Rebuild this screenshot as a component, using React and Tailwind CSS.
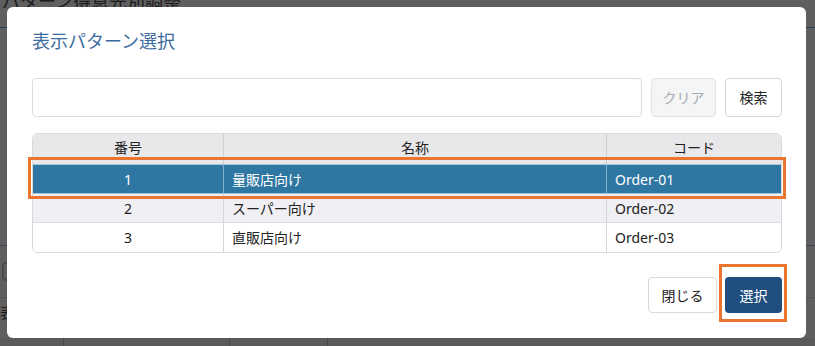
import React from "react";

const rows = [
  { no: 1, name: "量販店向け", code: "Order-01" },
  { no: 2, name: "スーパー向け", code: "Order-02" },
  { no: 3, name: "直販店向け", code: "Order-03" },
];

const font = { fontFamily: '"Noto Sans", "Noto Sans CJK JP", sans-serif' };

export default function App() {
  const selected = 1;

  return (
    <div className="relative w-[815px] h-[346px] overflow-hidden bg-[#5f5f5f]" style={font}>
      {/* page behind the overlay */}
      <div className="flex flex-col">
        <div className="h-[40px] border-b border-[#2c3e55] pl-[2px] -mt-[12px] text-[18px] leading-[26px] text-[#1c1c1c]">
          パターン得意先別調整
        </div>
        <div className="h-[218px] border-b border-[#3a4658]" />
        <div className="flex items-start pt-[16px] h-[52px] border-b border-[#545454]">
          <div className="ml-[2px] w-[20px] h-[19px] rounded border-2 border-[#4a4a4a]" />
        </div>
        <div className="h-[36px] pt-[4px] text-[14px] text-[#1c1c1c]">表</div>
      </div>
      <div className="absolute left-0 right-0 top-[338px] h-[8px] flex bg-[#5a5a5a]">
        <div className="w-[64px] border-r border-[#4a4a4a]" />
        <div className="w-[166px] border-r border-[#4a4a4a]" />
        <div className="w-[98px] border-r border-[#4a4a4a]" />
      </div>

      {/* modal */}
      <div className="absolute left-[7px] top-[7px] w-[799px] h-[331px] rounded-[6px] bg-white pl-[25px] pr-[24px] pt-[21px] pb-[25px] flex flex-col">
        <h2 className="text-[18px] leading-[26px] text-[#3b6b9f] font-normal">表示パターン選択</h2>

        <div className="mt-[24px] flex gap-[9px] h-[39px]">
          <input
            type="text"
            className="flex-1 h-full rounded-[4px] border border-[#dcdcdc] bg-white px-3 text-[14px] outline-none"
          />
          <button className="w-[65px] h-full rounded-[4px] border border-[#e2e4e8] bg-[#f4f5f7] text-[14px] text-[#a6a9ad]">
            クリア
          </button>
          <button className="w-[57px] h-full rounded-[4px] border border-[#d6d6d6] bg-white text-[14px] text-[#222]">
            検索
          </button>
        </div>

        <div className="mt-[16px] rounded-[6px] border border-[#dadada] overflow-hidden text-[14px] text-[#222]">
          <div className="grid grid-cols-[191px_383px_1fr] h-[30px] bg-[#e8e8eb] items-center">
            <div className="text-center border-r border-[#cfcfd2] h-full leading-[28px]">番号</div>
            <div className="text-center border-r border-[#cfcfd2] h-full leading-[28px]">名称</div>
            <div className="text-center h-full leading-[28px]">コード</div>
          </div>
          {rows.map((r, i) => {
            const isSel = r.no === selected;
            return (
              <div
                key={r.no}
                className={`grid grid-cols-[191px_383px_1fr] ${
                  isSel
                    ? "h-[30px] bg-[#2e77a3] text-white border-y border-[#a9c4d6]"
                    : i % 2 === 1
                    ? "h-[29px] bg-[#f0f0f4] border-b border-[#dedee2]"
                    : "h-[29px] bg-white"
                }`}
              >
                <div className={`flex items-center justify-center border-r ${isSel ? "border-[#86aec6]" : "border-[#d6d6d8]"}`}>
                  {r.no}
                </div>
                <div className={`flex items-center pl-[8px] border-r ${isSel ? "border-[#86aec6]" : "border-[#d6d6d8]"}`}>
                  {r.name}
                </div>
                <div className="flex items-center pl-[8px]">{r.code}</div>
              </div>
            );
          })}
        </div>

        <div className="mt-auto flex justify-end gap-[8px]">
          <button className="w-[69px] h-[36px] rounded-[4px] border border-[#d9d9d9] bg-white text-[14px] text-[#222]">
            閉じる
          </button>
          <button className="w-[57px] h-[36px] rounded-[4px] bg-[#1f4e7f] text-[14px] text-white">
            選択
          </button>
        </div>

        {/* highlight annotations */}
        <div className="absolute left-[21px] top-[150px] w-[758px] h-[42px] border-[3px] border-[#ec7431] pointer-events-none" />
        <div className="absolute left-[712px] top-[257px] w-[68px] h-[58px] border-[3px] border-[#ec7431] pointer-events-none" />
      </div>
    </div>
  );
}
